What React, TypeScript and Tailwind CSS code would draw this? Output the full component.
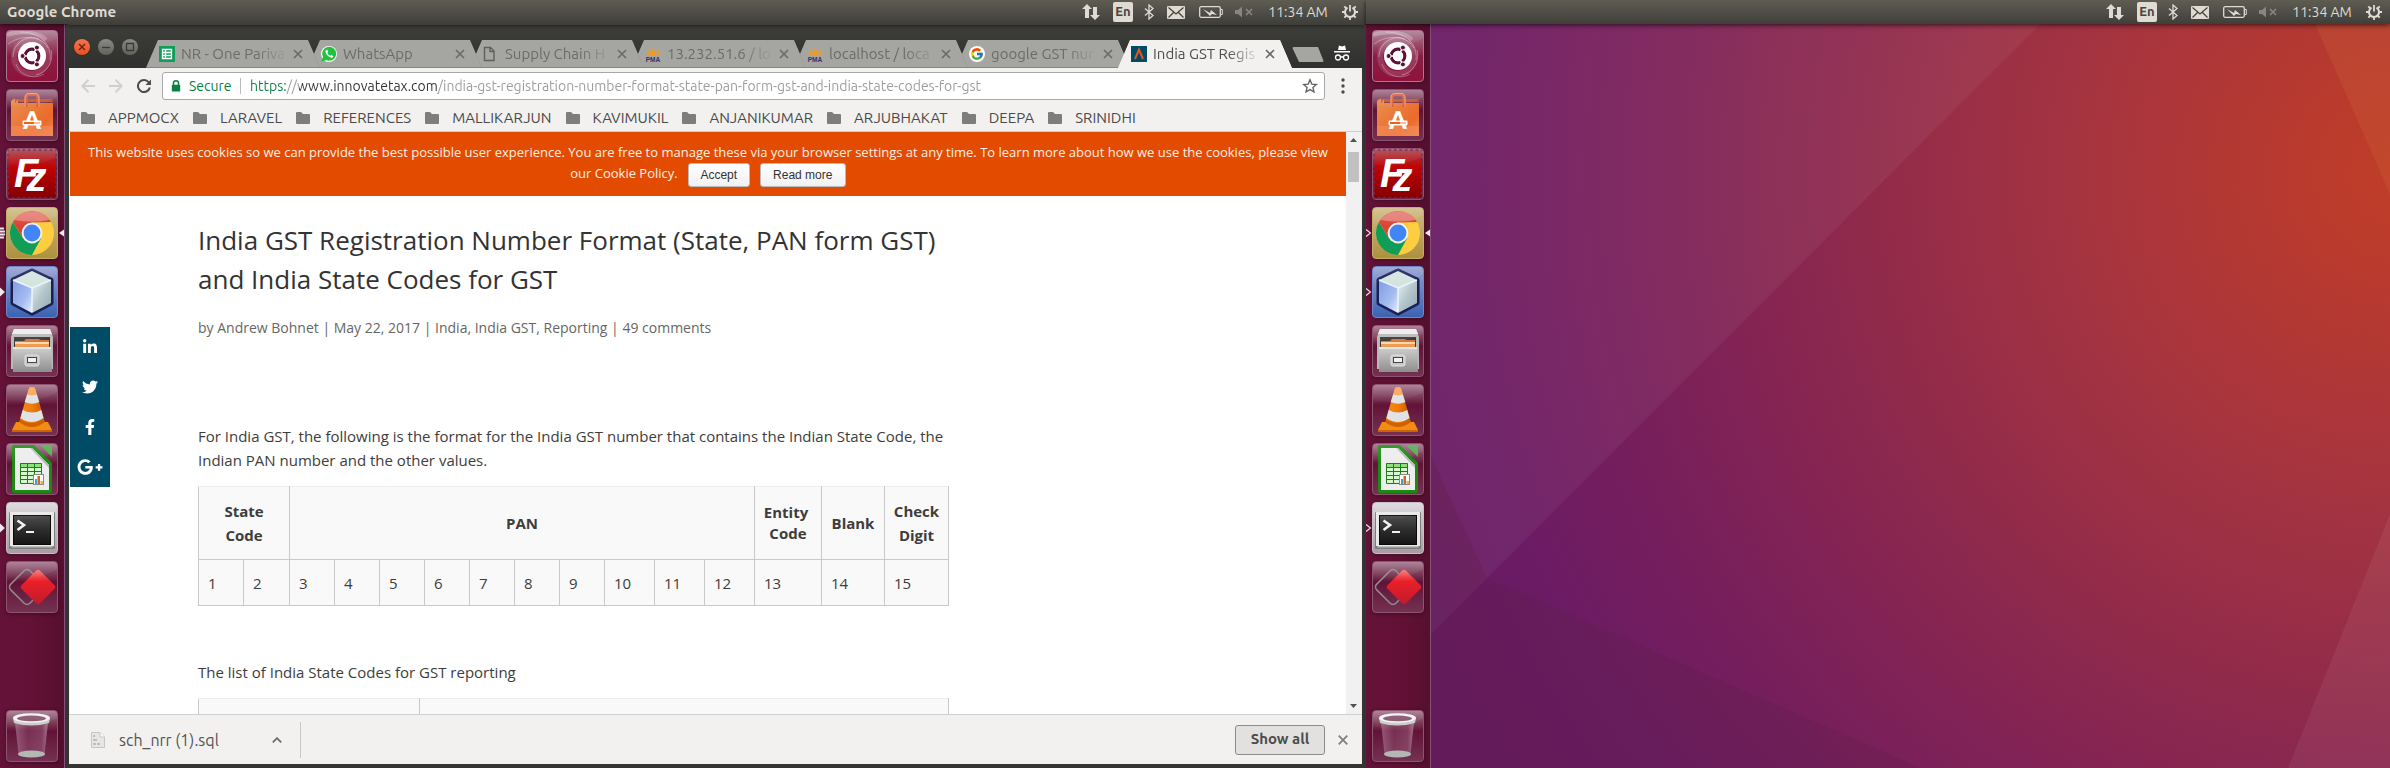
import type { ReactNode } from "react";
import { FaFacebookF, FaGooglePlusG, FaLinkedinIn, FaTwitter, FaWhatsapp } from "react-icons/fa";
import { FcGoogle } from "react-icons/fc";

/* ---------- shared gradients ---------- */

function Gradients() {
  return (
    <svg className="absolute size-0" aria-hidden="true">
      <defs>
        <linearGradient id="bag" x1="0" y1="0" x2="1" y2="1">
          <stop offset="0" stopColor="#e9904f" />
          <stop offset="0.7" stopColor="#ec6a2a" />
          <stop offset="1" stopColor="#f08a52" />
        </linearGradient>
        <linearGradient id="fz" x1="0" y1="0" x2="0" y2="1">
          <stop offset="0" stopColor="#a83a44" />
          <stop offset="0.35" stopColor="#bf0405" />
          <stop offset="1" stopColor="#850002" />
        </linearGradient>
        <linearGradient id="cubeLeft" x1="0" y1="0" x2="1" y2="1">
          <stop offset="0" stopColor="#7f9de2" />
          <stop offset="0.6" stopColor="#a5bcf0" />
          <stop offset="1" stopColor="#e4f0fa" />
        </linearGradient>
        <linearGradient id="cubeRight" x1="0" y1="0" x2="1" y2="1">
          <stop offset="0" stopColor="#e6f2f6" />
          <stop offset="0.5" stopColor="#b4c6cb" />
          <stop offset="1" stopColor="#93a7b0" />
        </linearGradient>
        <linearGradient id="steel" x1="0" y1="0" x2="0" y2="1">
          <stop offset="0" stopColor="#cfcfcf" />
          <stop offset="1" stopColor="#8e8e8e" />
        </linearGradient>
        <linearGradient id="cone" x1="0" y1="0" x2="1" y2="0">
          <stop offset="0" stopColor="#f58a1c" />
          <stop offset="0.5" stopColor="#f07d0a" />
          <stop offset="1" stopColor="#c85a00" />
        </linearGradient>
        <linearGradient id="screen" x1="0" y1="0" x2="0" y2="1">
          <stop offset="0" stopColor="#4c4c4c" />
          <stop offset="0.5" stopColor="#2c2c2c" />
          <stop offset="1" stopColor="#161616" />
        </linearGradient>
        <linearGradient id="ruby" x1="0" y1="0" x2="1" y2="1">
          <stop offset="0" stopColor="#f87f80" />
          <stop offset="0.35" stopColor="#ea1f28" />
          <stop offset="1" stopColor="#bd1c2c" />
        </linearGradient>
        <linearGradient id="bin" x1="0" y1="0" x2="1" y2="0">
          <stop offset="0" stopColor="#b98aa4" stopOpacity="0.6" />
          <stop offset="0.4" stopColor="#8d4a6c" stopOpacity="0.5" />
          <stop offset="0.8" stopColor="#96567a" stopOpacity="0.6" />
          <stop offset="1" stopColor="#d0b0c0" stopOpacity="0.6" />
        </linearGradient>
        <linearGradient id="gloss" x1="0" y1="0" x2="0" y2="1">
          <stop offset="0" stopColor="#fff" stopOpacity="0.4" />
          <stop offset="1" stopColor="#fff" stopOpacity="0.05" />
        </linearGradient>
      </defs>
    </svg>
  );
}

/* ---------- launcher artwork, drawn on a 52 unit grid ---------- */

const DashArt = (
  <>
    <g fill="none" stroke="#fff">
      <circle cx="25" cy="27" r="17" strokeWidth="6" opacity="0.13" />
      <path d="M7 27A19 19 0 0 1 33 9M45 20A20 20 0 0 1 30 45M2 14C14 5 34 4 42 18" opacity="0.35" />
      <path d="M14 2C34 2 46 14 44 30M10 34C14 46 28 50 38 44" opacity="0.3" />
      <path d="M1 5C14 0 34 2 40 10" opacity="0.25" strokeWidth="4" />
    </g>
    <circle cx="26" cy="26" r="14" fill="#fff" />
    <circle cx="26" cy="26" r="6.8" fill="none" stroke="#5b1237" strokeWidth="3.2" />
    <g stroke="#fff" strokeWidth="1.5">
      <path d="M26 26H15M26 26L31.5 16.5M26 26L31.5 35.5" />
    </g>
    <circle cx="26" cy="26" r="5.2" fill="#fff" />
    <g fill="#5b1237" stroke="#fff" strokeWidth="1">
      <circle cx="16.6" cy="26" r="2.5" />
      <circle cx="30.9" cy="17.6" r="2.5" />
      <circle cx="30.9" cy="34.4" r="2.5" />
    </g>
  </>
);

const SoftwareArt = (
  <>
    <path d="M6 10H46L47 13H5Z" fill="#c9562a" />
    <path d="M5 12L9 9.500V14L12 10V14H47V47H5Z" fill="url(#bag)" />
    <path d="M5 37H47V47H5Z" fill="#f28a55" opacity="0.7" />
    <path d="M20 18V9Q20 5.500 23 5.500H29Q32 5.500 32 9V18" fill="none" stroke="#d9623a" strokeWidth="3" />
    <path d="M19 18V9Q19 4.500 23 4.500H29Q33 4.500 33 9V18" fill="none" stroke="#f0a07c" strokeWidth="1" />
    <text x="26" y="40" textAnchor="middle" fontSize="25" fontWeight="900" fill="#fff" fontFamily="Lato, sans-serif">A</text>
    <rect x="16.500" y="31.500" width="19" height="5" rx="1" fill="#fff" />
    <rect x="18" y="33" width="10" height="2" fill="#e8641b" />
    <rect x="28" y="33" width="6" height="2" fill="#f7c0a0" />
  </>
);

const FileZillaArt = (
  <>
    <rect x="2" y="2" width="48" height="48" fill="url(#fz)" />
    <rect x="1.500" y="1.500" width="49" height="49" fill="none" stroke="#6e2a4c" strokeWidth="3.400" strokeDasharray="0 5.440" strokeLinecap="round" />
    <text x="8" y="39" fontSize="40" fontWeight="bold" fontStyle="italic" fill="#fff" fontFamily="Liberation Sans, sans-serif">
      F<tspan dx="-12" dy="4">z</tspan>
    </text>
  </>
);

const ChromeArt = (
  <>
    <circle cx="26" cy="26" r="22" fill="#ffcd40" />
    <path d="M6.950 15A22 22 0 0 0 26 48L35.100 31.250L26 26L16.900 31.250Z" fill="#0f9d58" />
    <path d="M6.950 15A22 22 0 0 1 45.050 15L26 15.500V26L16.900 31.250Z" fill="#db4437" />
    <path d="M8.500 13A22 22 0 0 1 43.500 13Q26 16 8.500 13Z" fill="#fff" opacity="0.3" />
    <circle cx="26" cy="26" r="10.400" fill="#f1f1f1" />
    <circle cx="26" cy="26" r="8.400" fill="#4285f4" />
  </>
);

const CubeArt = (
  <>
    <path d="M26 5L45 14V37L26 47L7 37V14Z" fill="#1b1f57" stroke="#1b1f57" strokeWidth="5" strokeLinejoin="round" />
    <path d="M26 5L45 14L26 22L7 14Z" fill="#d3e4df" />
    <path d="M7 14L26 22V47L7 37Z" fill="url(#cubeLeft)" />
    <path d="M45 14L26 22V47L45 37Z" fill="url(#cubeRight)" />
    <path d="M7 14L26 22L45 14M26 22V46" fill="none" stroke="#f4fbff" strokeWidth="1.400" opacity="0.9" />
  </>
);

const FilesArt = (
  <>
    <path d="M8 4H44L47 12V44H5V12Z" fill="#b9b9b9" />
    <path d="M8 4H44L46 9H6Z" fill="#ececec" />
    <path d="M8 12H44V24H8Z" fill="#3b3a37" />
    <path d="M9 16H18L20 14H33L34 15H43V24H9Z" fill="#d8743a" />
    <path d="M9 17H43V21H9Z" fill="#f7d9b0" />
    <path d="M9 19H43V23H9Z" fill="#ee9c52" />
    <path d="M7 22H45L46 47H7Z" fill="url(#steel)" />
    <path d="M7 22H45V24H7Z" fill="#e6e6e6" />
    <rect x="19" y="30" width="14" height="11" rx="2" fill="#c9c9c9" stroke="#e2e2e2" />
    <rect x="21.500" y="32.500" width="9" height="5" fill="#f2f2f2" stroke="#444" />
  </>
);

const ConeArt = (
  <>
    <path d="M10 38H42L46 46V48H6V46Z" fill="#f28c14" />
    <path d="M6 46H46V48H6Z" fill="#c96400" />
    <path d="M13 38Q26 48 39 38L37 33H15Z" fill="#cf6200" />
    <path d="M23 4Q26 2 29 4L38 35Q26 43 14 35Z" fill="url(#cone)" />
    <path d="M21.300 10Q26 12.500 30.700 10L33.300 18Q26 21.500 18.700 18Z" fill="#dfe3e6" />
    <path d="M16.700 26Q26 31 35.300 26L37.500 34Q26 42 14.500 34Z" fill="#dfe3e6" />
    <path d="M23 4Q26 2 29 4L30.700 10Q26 12.500 21.300 10Z" fill="#f7a65c" />
  </>
);

const CalcArt = (
  <>
    <path d="M8 2H28L46 20V48Q46 50 44 50H8Q6 50 6 48V4Q6 2 8 2Z" fill="#1c8a12" />
    <path d="M34 2H46V14Z" fill="#4fae4a" />
    <path d="M9 5H26L43 22V47H9Z" fill="#ededed" />
    <path d="M26 5L43 22V25L24 5Z" fill="#b9bdb9" />
    <rect x="14" y="20" width="22" height="21" fill="#d7f7cf" />
    <path d="M14 20H36V24H14Z" fill="#8ee07c" />
    <path d="M14.500 20.500H35.500V40.500H14.500ZM14 24.500H36M14 28.500H36M14 32.500H36M14 36.500H36M21.500 20V41M28.500 20V41" fill="none" stroke="#1a7f10" />
    <rect x="27.500" y="31.500" width="10" height="10" fill="#fff" stroke="#8a8a8a" />
    <path d="M29 36H31V41H29Z" fill="#3aa0e0" />
    <path d="M31.500 33H34V41H31.500Z" fill="#d8632a" />
    <path d="M34.500 38H37V41H34.500Z" fill="#f2b824" />
  </>
);

const TerminalArt = (
  <>
    <rect x="3" y="10" width="46" height="37" rx="1" fill="#7d7d7d" />
    <rect x="4" y="10" width="44" height="34" fill="#e9e9e9" />
    <rect x="5.500" y="44" width="41" height="1.500" fill="#bdbdbd" />
    <rect x="7" y="13" width="38" height="30" fill="#090909" />
    <rect x="8" y="14" width="36" height="28" fill="url(#screen)" />
    <path d="M11.500 18.500L18 23L11.500 28" fill="none" stroke="#f2f2f2" strokeWidth="2.600" />
    <path d="M20 30H28" stroke="#f2f2f2" strokeWidth="2.200" />
  </>
);

const DiamondArt = (
  <>
    <rect x="7.500" y="12.500" width="27" height="27" rx="4" fill="none" stroke="#8d8a8c" strokeWidth="1.600" transform="rotate(45 21 26)" />
    <rect x="19" y="13" width="26" height="26" rx="3" fill="url(#ruby)" transform="rotate(45 32 26)" />
  </>
);

const TrashArt = (
  <>
    <path d="M8.500 8H42.500L38.500 44Q26 49 12.500 44Z" fill="url(#bin)" />
    <ellipse cx="25.500" cy="44" rx="13.500" ry="3.600" fill="#b4b8b4" />
    <path d="M7 8L8 13Q25 18 43 13L44 8Z" fill="#c9cbc9" />
    <ellipse cx="25.500" cy="8" rx="18.500" ry="4.800" fill="#f0f1f0" />
    <ellipse cx="25.500" cy="8.400" rx="14.500" ry="2.800" fill="#86506c" />
  </>
);

/* ---------- launcher ---------- */

type App = { name: string; tile: string; art: ReactNode; windows?: number; focused?: boolean };

const plainTile = "bg-linear-to-b from-[#a0718a] via-[#611237] via-40% to-[#743152] border-[#8e5470]";

const apps: App[] = [
  { name: "Search your computer", tile: "bg-linear-to-b from-[#a87790] via-[#8a1d45] via-50% to-[#8f123b] border-[#b07590]", art: DashArt },
  { name: "Ubuntu Software", tile: plainTile, art: SoftwareArt },
  { name: "FileZilla", tile: plainTile, art: FileZillaArt },
  { name: "Google Chrome", tile: "bg-linear-to-b from-[#cfba84] to-[#ad913c] border-[#c5ad68]", art: ChromeArt, windows: 3, focused: true },
  { name: "NetBeans IDE", tile: "bg-linear-to-b from-[#939fcf] to-[#3b63b2] border-[#6d88cc]", art: CubeArt, windows: 1 },
  { name: "Files", tile: plainTile, art: FilesArt },
  { name: "VLC media player", tile: plainTile, art: ConeArt },
  { name: "LibreOffice Calc", tile: plainTile, art: CalcArt },
  { name: "Terminal", tile: "bg-linear-to-b from-[#d9d5d8] to-[#a79ca4] border-[#c9bfc6]", art: TerminalArt, windows: 1 },
  { name: "AnyDesk", tile: plainTile, art: DiamondArt },
];

function Pip({ count, hollow }: { count: number; hollow: boolean }) {
  return (
    <svg viewBox="0 0 6 12" className="h-3 w-1.5 shrink-0" aria-hidden="true">
      {hollow ? (
        <path d="M0 2.500L4.500 6L0 9.500" fill="none" stroke="#efe9ec" strokeWidth="1.200" />
      ) : count > 1 ? (
        <path d="M0 1.500H4M0 4.500H5M0 7.500H5M0 10.500H4" stroke="#efe9ec" strokeWidth="1.800" fill="none" />
      ) : (
        <path d="M0 1.500L5 6L0 10.500Z" fill="#efe9ec" />
      )}
    </svg>
  );
}

function LauncherRow({ app, hollow }: { app: App; hollow: boolean }) {
  return (
    <li className="flex items-center">
      {app.windows ? <Pip count={app.windows} hollow={hollow} /> : <span className="w-1.5" />}
      <button
        type="button"
        aria-label={app.name}
        className={`size-[52px] overflow-hidden rounded-[4px] border shadow-[0_1px_4px_rgba(0,0,0,0.35)] ${app.tile}`}
      >
        <svg viewBox="1 1 50 50" className="size-full">
          {app.art}
          <path d="M0 0H52V8Q26 22 0 16Z" fill="url(#gloss)" opacity="0.35" />
        </svg>
      </button>
      {app.focused && (
        <svg viewBox="0 0 6 8" className="h-2 w-1.5 shrink-0" aria-hidden="true">
          <path d="M6 0.500V7.500L1 4Z" fill="#efe9ec" />
        </svg>
      )}
    </li>
  );
}

function Launcher({ hollow = false }: { hollow?: boolean }) {
  return (
    <nav aria-label="Launcher" className="flex w-[65px] shrink-0 flex-col justify-between border-r border-[#84507c] bg-linear-to-r from-[#651239] via-[#631136] to-[#570f2f] pt-1.5 pb-1.5">
      <ul className="flex flex-col gap-[7px]">
        {apps.map((app) => (
          <LauncherRow key={app.name} app={app} hollow={hollow} />
        ))}
      </ul>
      <ul>
        <LauncherRow app={{ name: "Trash", tile: plainTile, art: TrashArt }} hollow={hollow} />
      </ul>
    </nav>
  );
}

/* ---------- top panel ---------- */

function TopPanel({ title }: { title?: string }) {
  return (
    <header className="relative z-20 flex h-6 shrink-0 items-center justify-between bg-linear-to-b from-[#5f5d52] via-[#4f4e47] to-[#3f3e39] pr-2 pl-[7px] font-['Ubuntu','Open_Sans',sans-serif] text-[#dfdbd2] shadow-[0_1px_5px_rgba(0,0,0,0.7)]">
      <span className="text-[15px] leading-6 font-bold">{title}</span>
      <div className="flex items-center">
        <svg viewBox="0 0 18 18" className="mr-[13px] size-[18px] fill-[#dfdbd2]" aria-label="Network">
          <path d="M5 1L10 6H7V15H3V6H0ZM13 17L8 12H11V4H15V12H18Z" />
        </svg>
        <span className="mr-[11px] flex h-5 w-5 items-center justify-center rounded-xs bg-[#dfdbd2] text-[13px] font-semibold text-[#45443f]">En</span>
        <svg viewBox="0 0 10 16" className="mr-[13px] h-4 w-2.5" fill="none" stroke="#dfdbd2" strokeWidth="1.300" aria-label="Bluetooth">
          <path d="M1 4.500L9 11.500L5 15V1L9 4.500L1 11.500" />
        </svg>
        <svg viewBox="0 0 18 13" className="mr-3.5 h-[13px] w-[18px]" aria-label="Messages">
          <rect width="18" height="13" rx="1" fill="#dfdbd2" />
          <path d="M1.500 1.500L9 8L16.500 1.500M1.500 11.500L6.500 6.500M16.500 11.500L11.500 6.500" fill="none" stroke="#45443f" strokeWidth="1.300" />
        </svg>
        <svg viewBox="0 0 24 12" className="mr-3 h-3 w-6" aria-label="Battery">
          <rect x="0.700" y="0.700" width="20.600" height="10.600" rx="1.500" fill="none" stroke="#dfdbd2" strokeWidth="1.300" />
          <path d="M22 3.500H23.300V8.500H22" fill="none" stroke="#dfdbd2" />
          <path d="M4 3L11 7L12 4L18 9L13 8L11 10Z" fill="#dfdbd2" />
        </svg>
        <svg viewBox="0 0 18 12" className="mr-3.5 h-3 w-[18px]" aria-label="Muted">
          <path d="M0 4H3L7 0.500V11.500L3 8H0Z" fill="#88867e" />
          <path d="M11 3L17 9M17 3L11 9" stroke="#88867e" strokeWidth="1.700" />
        </svg>
        <time className="mr-[13px] w-[62px] text-center text-sm leading-6 whitespace-nowrap">11:34 AM</time>
        <svg viewBox="0 0 16 16" className="size-4" fill="none" stroke="#dfdbd2" strokeWidth="2" aria-label="System">
          <path d="M5.500 3.700A5 5 0 1 0 10.500 3.700" />
          <path d="M8 1V7.500" strokeWidth="1.800" />
          <path d="M0 8H3M13 8H16M8 13V16M2.300 2.300L4.500 4.500M13.700 2.300L11.500 4.500M2.300 13.700L4.500 11.500M13.700 13.700L11.500 11.500" strokeWidth="1.800" />
        </svg>
      </div>
    </header>
  );
}

/* ---------- browser tabs ---------- */

const SheetsIcon = (
  <svg viewBox="0 0 16 16" className="size-4 shrink-0">
    <rect width="16" height="16" fill="#0f9d58" />
    <path d="M3.500 3.500H12.500V12.500H3.500ZM3.500 6.500H12.500M3.500 9.500H12.500M6.500 3.500V12.500" fill="none" stroke="#fff" strokeWidth="1.300" />
  </svg>
);

const WhatsAppIcon = (
  <span className="relative flex size-4 shrink-0 items-center justify-center rounded-full bg-white">
    <svg viewBox="0 0 16 16" className="size-4">
      <circle cx="8.200" cy="7.800" r="7" fill="#1fc23c" />
      <path d="M0.500 15.500L2 10.500L5.500 14Z" fill="#1fc23c" />
      <path d="M5 4Q3.500 6 6 9Q9 12.500 11.500 11.500L12.500 10.300L10.300 8.800L9.300 9.800Q7.300 9 6.400 7L7.200 6L6.200 3.800Z" fill="#fff" />
    </svg>
  </span>
);

const PageIcon = (
  <svg viewBox="0 0 16 16" className="size-4 shrink-0" fill="none" stroke="#5f5f5d" strokeWidth="1.400">
    <path d="M1.500 1.500H7.500L11 5V14.500H1.500ZM7 1.500V5.500H11" />
  </svg>
);

const PmaIcon = (
  <svg viewBox="0 0 16 16" className="size-4 shrink-0">
    <path d="M1 10Q4 6 4 2Q6 5 5.500 10ZM6 10Q8 5 7.500 0.500Q11 5 10 10ZM10.500 10Q13 7 12 2Q15.500 6 15 10Z" fill="#f39a1e" />
    <text x="8" y="15.500" textAnchor="middle" fontSize="6.500" fontWeight="bold" fill="#33336b" fontFamily="Liberation Sans, sans-serif">PMA</text>
  </svg>
);

const GoogleIcon = (
  <span className="flex size-4 shrink-0 items-center justify-center rounded-full bg-white">
    <FcGoogle className="size-3.5" />
  </span>
);

const InnovateIcon = (
  <svg viewBox="0 0 16 16" className="size-4 shrink-0">
    <rect width="16" height="16" fill="#004c66" />
    <path d="M4 13L8 3.500L12 13" fill="none" stroke="#e8541a" strokeWidth="2" />
  </svg>
);

const tabs = [
  { title: "NR - One Pariva", icon: SheetsIcon, stack: "z-[7]" },
  { title: "WhatsApp", icon: WhatsAppIcon, stack: "z-[6]" },
  { title: "Supply Chain H", icon: PageIcon, stack: "z-[5]" },
  { title: "13.232.51.6 / lo", icon: PmaIcon, stack: "z-[4]" },
  { title: "localhost / loca", icon: PmaIcon, stack: "z-[3]" },
  { title: "google GST nur", icon: GoogleIcon, stack: "z-[2]" },
  { title: "India GST Regis", icon: InnovateIcon, stack: "z-10", active: true },
];

const tabShape = "[clip-path:polygon(12px_0,calc(100%-12px)_0,100%_100%,0_100%)]";

function TabStrip() {
  return (
    <div className="flex items-end" role="tablist">
      {tabs.map((tab, i) => (
        <div
          key={tab.title}
          className={`relative flex h-7 w-[174px] ${i > 0 ? "-ml-3" : ""} ${tab.stack} ${tabShape} ${tab.active ? "bg-[#f2f1f0]" : "bg-[#858582]"}`}
        >
          <div className={`flex w-full items-center pl-[13px] ${tabShape} ${tab.active ? "bg-[#f2f1f0] text-[#4c4c4c]" : "mb-px bg-[#a5a5a2] text-[#6b6b69]"}`}>
            {tab.icon}
            <button type="button" role="tab" aria-selected={!!tab.active} className="ml-1.5 w-[110px] [mask-image:linear-gradient(to_right,black_68%,transparent_98%)] text-left text-[15px] leading-6 whitespace-nowrap">
              {tab.title}
            </button>
            <button type="button" aria-label="Close tab" className="ml-0.5">
              <svg viewBox="0 0 10 10" className="size-2.5" stroke="#6b6b69" strokeWidth="1.700">
                <path d="M1 1L9 9M9 1L1 9" />
              </svg>
            </button>
          </div>
        </div>
      ))}
      <button type="button" aria-label="New tab" className="mb-1.5 h-[15px] w-8 rounded-xs bg-[#a5a5a2] [clip-path:polygon(0_0,26px_0,100%_100%,7px_100%)]" />
    </div>
  );
}

function TitleBar() {
  return (
    <div className="flex h-11 shrink-0 items-end rounded-t-sm border-t border-[#6a6964] bg-linear-to-b from-[#3d3d3a] to-[#30302e] pl-2">
      <div className="mb-[13px] flex gap-2">
        <button type="button" aria-label="Close window" className="size-4 rounded-full bg-linear-to-b from-[#f37350] to-[#e9501f] shadow-[0_0_1px_#1a1a1a]">
          <svg viewBox="0 0 16 16" stroke="#5c2411" strokeWidth="1.300"><path d="M5 5L11 11M11 5L5 11" /></svg>
        </button>
        <button type="button" aria-label="Minimise window" className="size-4 rounded-full bg-linear-to-b from-[#8b8a84] to-[#62615c]">
          <svg viewBox="0 0 16 16" stroke="#3a3936" strokeWidth="1.300"><path d="M4 8.500H12" /></svg>
        </button>
        <button type="button" aria-label="Maximise window" className="size-4 rounded-full bg-linear-to-b from-[#8b8a84] to-[#62615c]">
          <svg viewBox="0 0 16 16" fill="none" stroke="#3a3936" strokeWidth="1.300"><path d="M4.500 4.500H11.500V11.500H4.500Z" /></svg>
        </button>
      </div>
      <div className="ml-2">
        <TabStrip />
      </div>
      <svg viewBox="0 0 18 18" className="mb-1.5 ml-auto mr-[15px] size-[18px]" aria-label="Incognito">
        <path d="M5 6L6 1.500L9 2.500L12 1.500L13 6ZM1 7H17V8.500H1Z" fill="#fff" />
        <path d="M7.500 13.500Q9 12 10.500 13.500" fill="none" stroke="#fff" strokeWidth="1.200" />
        <circle cx="5" cy="13.500" r="2.500" fill="none" stroke="#fff" strokeWidth="1.300" />
        <circle cx="13" cy="13.500" r="2.500" fill="none" stroke="#fff" strokeWidth="1.300" />
      </svg>
    </div>
  );
}

/* ---------- toolbar and bookmarks ---------- */

const pageUrl =
  "https://www.innovatetax.com/india-gst-registration-number-format-state-pan-form-gst-and-india-state-codes-for-gst";

function Toolbar() {
  return (
    <div className="flex h-9 shrink-0 items-center pl-3">
      <div className="flex gap-3.5">
        <button type="button" aria-label="Back">
          <svg viewBox="0 0 14 14" className="size-3.5" fill="none" stroke="#cfcfcd" strokeWidth="2"><path d="M14 7H1.500M7.500 0.800L1.300 7L7.500 13.200" /></svg>
        </button>
        <button type="button" aria-label="Forward">
          <svg viewBox="0 0 14 14" className="size-3.5" fill="none" stroke="#cfcfcd" strokeWidth="2"><path d="M0 7H12.500M6.500 0.800L12.700 7L6.500 13.200" /></svg>
        </button>
        <button type="button" aria-label="Reload">
          <svg viewBox="0 0 14 14" className="size-3.5" fill="none" stroke="#4b4b4b" strokeWidth="2"><path d="M11.800 3.500A6 6 0 1 0 12.800 8.500" /><path d="M14 0.500V6H8.500Z" fill="#4b4b4b" stroke="none" /></svg>
        </button>
      </div>
      <div className="ml-[11px] flex h-7 flex-1 items-center rounded-[3px] border border-[#a9a8a6] bg-white pr-1.5 pl-2">
        <svg viewBox="0 0 10 12" className="size-3 w-2.5" aria-hidden="true">
          <path d="M2.500 5V3.300A2.500 2.500 0 0 1 7.500 3.300V5" fill="none" stroke="#0b8043" strokeWidth="1.500" />
          <rect x="0.800" y="4.800" width="8.400" height="6.700" rx="0.800" fill="#0b8043" />
        </svg>
        <label htmlFor="address" className="ml-2 w-[43px] text-sm text-[#0b8043]">Secure</label>
        <span className="mr-[9px] ml-2 h-4 w-px bg-[#bdbdbb]" />
        <input
          id="address"
          type="text"
          readOnly
          defaultValue={pageUrl}
          className="min-w-0 flex-1 bg-[linear-gradient(to_right,#0b8043_36px,#9a9a98_36px,#9a9a98_49px,#333_49px,#333_188px,#9a9a98_188px)] bg-clip-text text-sm text-transparent outline-none"
        />
        <button type="button" aria-label="Bookmark this page">
          <svg viewBox="0 0 16 16" className="size-4" fill="none" stroke="#5f5f5f" strokeWidth="1.300"><path d="M8 1.800L9.800 6.100L14.400 6.500L10.900 9.500L12 14L8 11.600L4 14L5.100 9.500L1.600 6.500L6.200 6.100Z" /></svg>
        </button>
      </div>
      <button type="button" aria-label="Menu" className="mr-[17px] ml-4">
        <svg viewBox="0 0 4 16" className="h-4 w-1" fill="#4b4b4b"><circle cx="2" cy="2" r="1.700" /><circle cx="2" cy="8" r="1.700" /><circle cx="2" cy="14" r="1.700" /></svg>
      </button>
    </div>
  );
}

const bookmarks = ["APPMOCX", "LARAVEL", "REFERENCES", "MALLIKARJUN", "KAVIMUKIL", "ANJANIKUMAR", "ARJUBHAKAT", "DEEPA", "SRINIDHI"];

function BookmarksBar() {
  return (
    <nav aria-label="Bookmarks" className="flex h-7 shrink-0 items-center gap-3.5 border-b border-[#cfcecc] pl-3">
      {bookmarks.map((name) => (
        <a key={name} href="#" className="flex items-center gap-[13px] text-[15px] leading-5 text-[#4a4a4a]">
          <svg viewBox="0 0 14 12" className="h-3 w-3.5" fill="#7d7d7b"><path d="M1 0H5L7 2H13Q14 2 14 3V11Q14 12 13 12H1Q0 12 0 11V1Q0 0 1 0Z" /></svg>
          {name}
        </a>
      ))}
    </nav>
  );
}

/* ---------- web page ---------- */

const th = "border-x border-b border-[#c9c9c9] border-t border-t-[#eee] text-center align-middle font-bold";

function Article() {
  return (
    <article className="ml-32 max-w-[751px] pt-[25px] text-[15px] leading-6 text-[#3d3d3d]">
      <h1 className="text-[26px] leading-[39px] text-[#333]">
        India GST Registration Number Format (State, PAN form GST) and India State Codes for GST
      </h1>
      <p className="mt-[17px] text-sm leading-6 text-[#666]">
        by <a href="#">Andrew Bohnet</a> | May 22, 2017 | <a href="#">India</a>, <a href="#">India GST</a>, <a href="#">Reporting</a> | <a href="#">49 comments</a>
      </p>
      <p className="mt-21">
        For India GST, the following is the format for the India GST number that contains the Indian State Code, the
        Indian PAN number and the other values.
      </p>
      <table className="mt-3.5 w-full table-fixed border-collapse bg-[#f9f9f9]">
        <colgroup>
          <col className="w-[45px]" /><col className="w-[46px]" />
          <col className="w-[45px]" /><col className="w-[45px]" /><col className="w-[45px]" /><col className="w-[45px]" />
          <col className="w-[45px]" /><col className="w-[45px]" /><col className="w-[45px]" />
          <col className="w-[50px]" /><col className="w-[50px]" /><col className="w-[50px]" />
          <col className="w-[67px]" /><col className="w-[63px]" /><col className="w-[64px]" />
        </colgroup>
        <thead>
          <tr className="h-[73px]">
            <th colSpan={2} className={th}>State<br />Code</th>
            <th colSpan={10} className={th}>PAN</th>
            <th className={`${th} pr-1 leading-[21px]`}>Entity<br />&nbsp;Code</th>
            <th className={th}>Blank</th>
            <th className={th}>Check<br />Digit</th>
          </tr>
        </thead>
        <tbody>
          <tr className="h-[46px]">
            {Array.from({ length: 15 }, (_, i) => (
              <td key={i} className="border border-[#c9c9c9] pl-[9px]">{i + 1}</td>
            ))}
          </tr>
        </tbody>
      </table>
      <p className="mt-[54px]">The list of India State Codes for GST reporting</p>
      <table className="mt-3.5 w-full table-fixed border-collapse bg-[#f9f9f9]">
        <colgroup><col className="w-[221px]" /><col /></colgroup>
        <tbody>
          <tr className="h-12">
            <td className="border border-[#c9c9c9] border-t-[#eee]" />
            <td className="border border-[#c9c9c9] border-t-[#eee]" />
          </tr>
        </tbody>
      </table>
    </article>
  );
}

const social = [
  { name: "LinkedIn", icon: <FaLinkedinIn className="size-4" /> },
  { name: "Twitter", icon: <FaTwitter className="size-4" /> },
  { name: "Facebook", icon: <FaFacebookF className="size-4" /> },
  { name: "Google Plus", icon: <FaGooglePlusG className="size-[26px]" /> },
];

const pageButton = "ml-2.5 inline-block h-6 rounded-[3px] border border-[#bbb] bg-linear-to-b from-white to-[#f1f1f1] text-center align-middle font-['Liberation_Sans',Arial,sans-serif] text-xs text-[#333]";

function WebPage() {
  return (
    <div className="flex min-h-0 flex-1 pr-px pl-px">
      <main className="relative min-w-0 flex-1 overflow-hidden bg-white font-['Open_Sans',sans-serif]">
        <div className="h-16 bg-[#e34c00] px-4 pt-2.5 text-center text-[13px] leading-[21px] text-[#fdeee6]">
          This website uses cookies so we can provide the best possible user experience. You are free to manage these
          via your browser settings at any time. To learn more about how we use the cookies, please view our Cookie
          Policy.
          <button type="button" className={`${pageButton} w-[62px]`}>Accept</button>
          <button type="button" className={`${pageButton} w-[86px]`}>Read more</button>
        </div>
        <Article />
        <aside className="absolute top-[195px] left-0 flex w-10 flex-col bg-[#004c66] text-white">
          {social.map((s) => (
            <a key={s.name} href="#" aria-label={s.name} className="flex size-10 items-center justify-center">
              {s.icon}
            </a>
          ))}
        </aside>
      </main>
      <div className="flex w-[15px] shrink-0 flex-col items-center justify-between bg-[#f1f1f1] py-1.5" aria-hidden="true">
        <div className="flex flex-col items-center gap-2.5">
          <svg viewBox="0 0 7 4" className="h-1 w-[7px]" fill="#505050"><path d="M0 4L3.500 0L7 4Z" /></svg>
          <div className="h-[30px] w-[11px] bg-[#c1c1c1]" />
        </div>
        <svg viewBox="0 0 7 4" className="h-1 w-[7px]" fill="#505050"><path d="M0 0L3.500 4L7 0Z" /></svg>
      </div>
    </div>
  );
}

function DownloadBar() {
  return (
    <footer className="flex h-[50px] shrink-0 items-center border-t border-[#d0cfcd] pr-3.5 pl-[22px]">
      <svg viewBox="0 0 14 16" className="h-4 w-3.5" aria-hidden="true">
        <path d="M0.500 0.500H9L13.500 5V15.500H0.500Z" fill="#e6e6e4" stroke="#c6c6c4" />
        <path d="M9 0.500V5H13.500" fill="#fff" stroke="#c6c6c4" />
        <path d="M2.500 4H4M2.500 8H6M2.500 12H5M6.500 12H9" stroke="#9a9a98" strokeWidth="1.600" strokeDasharray="1.400 0.500" />
      </svg>
      <a href="#" className="ml-3.5 w-[150px] text-base text-[#555]">sch_nrr (1).sql</a>
      <button type="button" aria-label="Download options" className="ml-[3px]">
        <svg viewBox="0 0 10 6" className="h-1.5 w-2.5" fill="none" stroke="#6b6b69" strokeWidth="1.800"><path d="M0.800 5.400L5 1.200L9.200 5.400" /></svg>
      </button>
      <span className="ml-[18px] h-9 w-px bg-[#c9c8c6]" />
      <button type="button" className="ml-auto h-[30px] w-[90px] rounded-[3px] border border-[#8b8b89] bg-[#e2e1df] text-[15px] font-bold text-[#4c4c4c]">Show all</button>
      <button type="button" aria-label="Close downloads bar" className="ml-[13px]">
        <svg viewBox="0 0 10 10" className="size-2.5" stroke="#7d7d7b" strokeWidth="1.700"><path d="M0.700 0.700L9.300 9.300M9.300 0.700L0.700 9.300" /></svg>
      </button>
    </footer>
  );
}

function BrowserWindow() {
  return (
    <section aria-label="Google Chrome" className="flex min-w-0 flex-1 flex-col bg-[#343432] pl-px font-['Ubuntu','Open_Sans',sans-serif]">
      <TitleBar />
      <div className="mr-1 mb-1 ml-[3px] flex min-h-0 flex-1 flex-col bg-[#f2f1f0]">
        <Toolbar />
        <BookmarksBar />
        <WebPage />
        <DownloadBar />
      </div>
    </section>
  );
}

function Wallpaper() {
  return (
    <svg viewBox="0 0 960 744" preserveAspectRatio="none" className="size-full" aria-hidden="true">
      <defs>
        <radialGradient id="sunset" gradientUnits="userSpaceOnUse" cx="970" cy="150" r="1080">
          <stop offset="0" stopColor="#bf3d28" />
          <stop offset="0.1" stopColor="#b93a2e" />
          <stop offset="0.3" stopColor="#a53440" />
          <stop offset="0.5" stopColor="#902a4b" />
          <stop offset="0.7" stopColor="#7b2059" />
          <stop offset="0.88" stopColor="#6b1b64" />
          <stop offset="1" stopColor="#671a62" />
        </radialGradient>
      </defs>
      <rect width="960" height="744" fill="url(#sunset)" />
      <path d="M0 0H610L0 610Z" fill="#fff" opacity="0.05" />
      <path d="M885 0H960V170Z" fill="#d8803c" opacity="0.16" />
      <path d="M960 490V744H858Z" fill="#fff" opacity="0.06" />
      <path d="M0 432L56 554L490 744H0Z" fill="#5a2045" opacity="0.25" />
    </svg>
  );
}

export default function App() {
  return (
    <div className="flex h-screen overflow-hidden bg-[#300a24]">
      <Gradients />
      <div className="flex min-w-0 flex-[1366] flex-col">
        <TopPanel title="Google Chrome" />
        <div className="flex min-h-0 flex-1">
          <Launcher />
          <BrowserWindow />
        </div>
      </div>
      <div className="flex min-w-0 flex-[1024] flex-col">
        <TopPanel />
        <div className="flex min-h-0 flex-1">
          <Launcher hollow />
          <div className="min-w-0 flex-1">
            <Wallpaper />
          </div>
        </div>
      </div>
    </div>
  );
}
